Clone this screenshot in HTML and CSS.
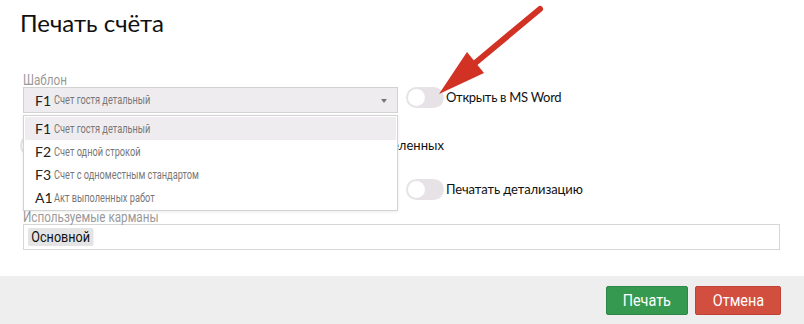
FILE: index.html
```html
<!DOCTYPE html>
<html lang="ru">
<head>
<meta charset="utf-8">
<title>Печать счёта</title>
<link rel="stylesheet" href="styles.css">
</head>
<body>
<div class="dialog">
  <header class="dlg-head">
    <h1 class="dlg-title">Печать счёта</h1>
  </header>
  <div class="dlg-body">
    <div class="grid">
      <div class="field">
        <div class="label"><span class="narrow">Шаблон</span></div>
        <div class="select">
          <span class="code">F1</span><span class="name narrow">Счет гостя детальный</span>
          <span class="caret"></span>
        </div>
      </div>
      <label class="switch-row row1">
        <span class="toggle"></span><span class="switch-text">Открыть в MS Word</span>
      </label>

      <label class="switch-row wide">
        <span class="toggle"></span><span class="switch-text">Печатать только услуги по счёту без выбранных и выделенных</span>
      </label>

      <label class="switch-row left3">
        <span class="toggle"></span><span class="switch-text">Группировать</span>
      </label>
      <label class="switch-row row3">
        <span class="toggle"></span><span class="switch-text">Печатать детализацию</span>
      </label>

      <div class="field wide">
        <div class="label"><span class="narrow">Используемые карманы</span></div>
        <div class="tags">
          <span class="tag">Основной</span>
        </div>
      </div>
    </div>

    <ul class="menu">
      <li class="item active"><span class="code">F1</span><span class="name narrow">Счет гостя детальный</span></li>
      <li class="item"><span class="code">F2</span><span class="name narrow">Счет одной строкой</span></li>
      <li class="item"><span class="code">F3</span><span class="name narrow">Счет с одноместным стандартом</span></li>
      <li class="item"><span class="code">A1</span><span class="name narrow">Акт выполенных работ</span></li>
    </ul>
  </div>
  <footer class="dlg-foot">
    <button class="btn btn-ok"><span class="btn-text">Печать</span></button>
    <button class="btn btn-cancel"><span class="btn-text">Отмена</span></button>
  </footer>

  <svg class="pointer" width="804" height="324" viewBox="0 0 804 324">
    <line x1="540" y1="9" x2="474" y2="64" stroke="#d13224" stroke-width="6" stroke-linecap="round"/>
    <polygon points="439,94 467,52 484,73" fill="#d13224"/>
  </svg>
</div>
</body>
</html>
```

FILE: styles.css
```css
* { box-sizing: border-box; }
html, body { margin: 0; padding: 0; background: #fff; }
body {
  font-family: Lato, "Noto Sans", sans-serif;
  color: #111;
  width: 804px;
  height: 324px;
  overflow: hidden;
}
.dialog { position: relative; width: 804px; height: 324px; }

.dlg-head { padding: 8px 20px 0; height: 71px; }
.dlg-title { margin: 0; font-weight: 400; font-size: 24px; line-height: 30px; color: #111; }

.dlg-body { position: relative; padding: 0 24px 0 23px; height: 205px; }

.grid {
  display: grid;
  grid-template-columns: 375px 1fr;
  column-gap: 8px;
  align-items: end;
}
.wide { grid-column: 1 / 3; }

/* condensed face imitation */
.narrow {
  display: inline-block;
  font-family: Roboto, "Liberation Sans", sans-serif;
  white-space: nowrap;
  transform: scaleX(0.77);
  transform-origin: 0 50%;
}

.label { font-size: 15px; line-height: 16px; color: #999; height: 16px; }
.label .narrow { transform: scaleX(0.78); }

.select {
  position: relative;
  height: 26px;
  background: #efecef;
  border: 1px solid #d2d2d2;
  display: flex;
  align-items: center;
  padding-left: 11px;
}
.code { font-size: 14px; color: #222; width: 19px; flex: none; }
.name { font-size: 12px; color: #777; }
.caret {
  position: absolute; right: 10px; top: 11px; width: 0; height: 0;
  border-left: 3.5px solid transparent; border-right: 3.5px solid transparent; border-top: 4px solid #777;
}

.switch-row { display: flex; align-items: center; height: 22px; font-size: 13px; letter-spacing: -0.1px; color: #111; }
.row1 .switch-text { letter-spacing: -0.3px; }
.toggle { position: relative; width: 38px; height: 21px; border-radius: 11px; background: #e6e2e6; flex: none; margin-right: 2px; }
.toggle::before { content: ""; position: absolute; left: 2px; top: 2px; width: 17px; height: 17px; border-radius: 50%; background: #fff; }
.row1 { margin-bottom: 5px; }
.switch-row.wide { margin-top: 21px; margin-left: -3px; white-space: nowrap; letter-spacing: 0.05px; }
.left3, .row3 { margin-top: 22px; }

.field.wide { margin-top: 8px; }
.tags { height: 26px; border: 1px solid #d6d6d6; padding: 3px 4px; display: flex; align-items: center; }
.tag {
  display: inline-block; font-family: Roboto, "Liberation Sans", sans-serif; font-size: 15px; color: #111;
  background: #e4e4e4; border-radius: 2px; padding: 0 4px; height: 18px; line-height: 18px; white-space: nowrap;
  transform: scaleX(0.84); transform-origin: 0 50%;
}

.menu {
  position: absolute; left: 23px; top: 44px; width: 375px; height: 96px; margin: 0; padding: 1px; list-style: none;
  background: #fff; border: 1px solid #d2d2d2; box-shadow: 0 1px 3px rgba(0,0,0,0.08);
}
.item { height: 23px; display: flex; align-items: center; padding-left: 10px; }
.item.active { background: #efecef; }

.dlg-foot {
  position: absolute; left: 0; right: 0; bottom: 0; height: 48px; background: #eee;
  display: flex; justify-content: flex-end; align-items: center; gap: 7px; padding-right: 23px;
}
.btn { height: 29px; border-radius: 2px; font-family: Roboto, "Liberation Sans", sans-serif; font-size: 16px; color: #fff; padding: 0; cursor: pointer; }
.btn-text { display: inline-block; transform: scaleX(0.9); }
.btn-ok { width: 82px; background: #359a50; border: 1px solid #2e8746; }
.btn-cancel { width: 86px; background: #d24e3f; border: 1px solid #bd4337; }

.pointer { position: absolute; left: 0; top: 0; pointer-events: none; }
```
